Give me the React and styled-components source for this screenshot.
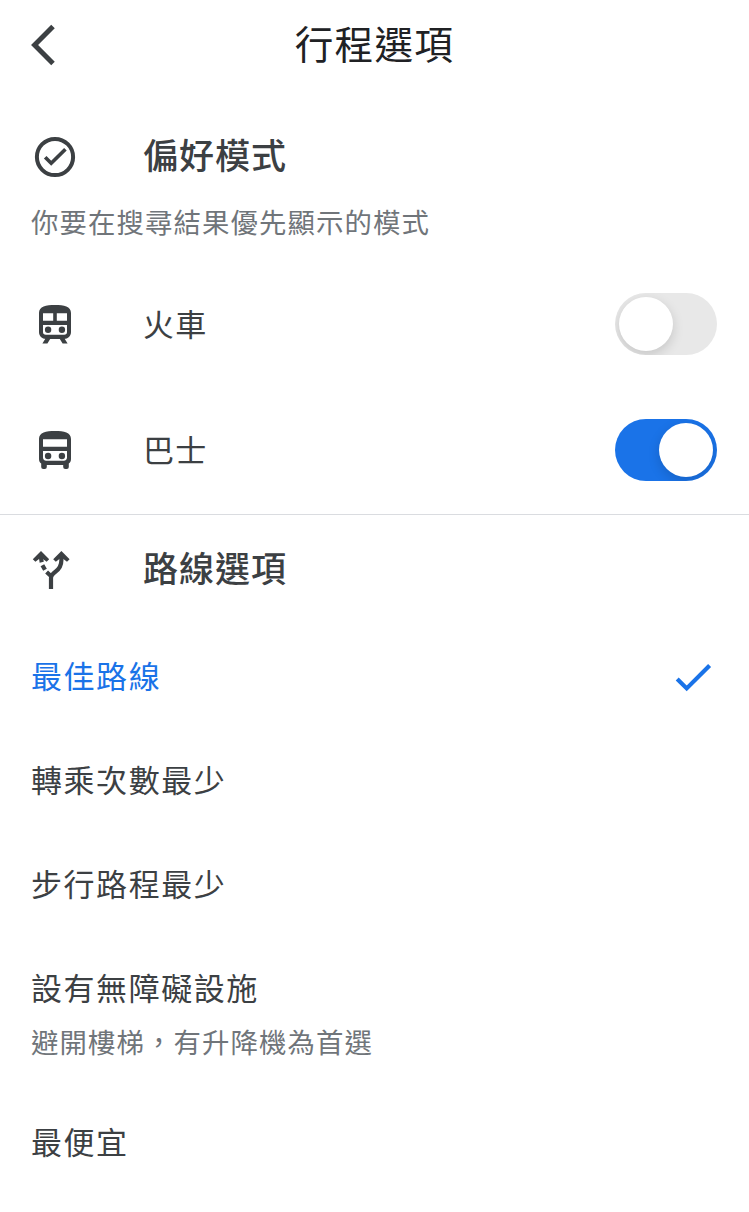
import { useState } from "react";
import styled, { createGlobalStyle } from "styled-components";

const GlobalStyle = createGlobalStyle`
  * {
    box-sizing: border-box;
  }
  body {
    margin: 0;
    background: #fff;
    color: #3c4043;
    font-family: "Noto Sans CJK TC", sans-serif;
  }
`;

const Page = styled.main`
  width: 749px;
  height: 1212px;
  overflow: hidden;
  background: #fff;
`;

const Header = styled.header`
  display: grid;
  grid-template-columns: 112px 1fr 112px;
  align-items: center;
  height: 90px;
`;

const Title = styled.h1`
  margin: 0;
  padding-bottom: 6px;
  font-size: 38.6px;
  font-weight: 400;
  line-height: 60px;
  letter-spacing: 1.3px;
  text-align: center;
  color: #202124;
`;

const IconButton = styled.button`
  display: flex;
  width: 48px;
  height: 48px;
  margin-left: 19px;
  padding: 0;
  border: none;
  background: none;
  color: #3c4043;
`;

const Section = styled.section`
  padding-top: ${(props) => props.$top || "0"};
  padding-bottom: ${(props) => (props.$divider ? "1px" : "0")};
  border-bottom: ${(props) => (props.$divider ? "1px solid #dadce0" : "none")};
`;

const Row = styled.div`
  display: flex;
  align-items: center;
  height: ${(props) => props.$height};
  padding: 0 32px 0 31px;
`;

const Icon = styled.svg`
  flex: none;
  width: 48px;
  height: 48px;
`;

const Heading = styled.h2`
  margin: 0 0 0 64px;
  padding-bottom: 6px;
  font-size: 35px;
  font-weight: 500;
  line-height: 54px;
  letter-spacing: 1px;
`;

const Label = styled.span`
  flex: 1;
  margin-left: 64px;
  padding-bottom: 3px;
  font-size: 31px;
  line-height: 48px;
  letter-spacing: 1.2px;
`;

const Hint = styled.p`
  margin: 0;
  padding: 0 0 ${(props) => props.$bottom || "0"} 31px;
  font-size: 27.4px;
  line-height: ${(props) => props.$line || "42px"};
  letter-spacing: 1.1px;
  color: #70757a;
`;

const Switch = styled.button`
  display: flex;
  justify-content: ${(props) => (props.$on ? "flex-end" : "flex-start")};
  width: 102px;
  height: 62px;
  padding: 4px;
  border: none;
  border-radius: 31px;
  overflow: hidden;
  background: ${(props) => (props.$on ? "#1a73e8" : "#e8e8e8")};
`;

const Knob = styled.span`
  width: 54px;
  height: 54px;
  border-radius: 50%;
  background: #fff;
  box-shadow: 0 4px 12px rgba(0, 0, 0, 0.15);
`;

const Option = styled.div`
  display: flex;
  align-items: center;
  justify-content: space-between;
  height: 104px;
  padding: 0 32px 0 31px;
  font-size: 31px;
  line-height: 48px;
  letter-spacing: 1.55px;
  color: ${(props) => (props.$selected ? "#1a73e8" : "#3c4043")};
`;

const OptionText = styled.span`
  padding-bottom: 4px;
`;

const OptionGroup = styled.div`
  height: 154px;

  ${Hint} {
    margin-top: -21px;
  }
`;

const BackIcon = () => (
  <Icon viewBox="0 0 48 48" fill="none" stroke="currentColor" strokeWidth="5">
    <path d="M34 5.6 15.6 24 34 42.4" />
  </Icon>
);

const CircleCheckIcon = () => (
  <Icon viewBox="0 0 48 48" fill="none" stroke="currentColor">
    <circle cx="24" cy="24" r="18.1" strokeWidth="4" />
    <path d="M14.2 24.3 20.2 30.2 34.4 16.2" strokeWidth="3.7" />
  </Icon>
);

const TrainIcon = () => (
  <Icon viewBox="0 0 48 48" fill="currentColor">
    <path
      fillRule="evenodd"
      d="M24 5c9 0 16 1.2 16 8v19c0 4-3 7-7 7H15c-4 0-7-3-7-7V13c0-6.8 7-8 16-8ZM12 13.200v7.600H22.2V13.200ZM25.800 13.200v7.600H36V13.200ZM12 25V32c0 1.800 1 2.800 2.800 2.800h18.400c1.800 0 2.800-1 2.800-2.800v-7Z"
    />
    <circle cx="17.1" cy="29.800" r="3.2" />
    <circle cx="30.9" cy="29.800" r="3.2" />
    <path d="M14.8 38h5L16.4 43.6H11.4ZM33.2 38h-5L31.6 43.6H36.6Z" />
  </Icon>
);

const BusIcon = () => (
  <Icon viewBox="0 0 48 48" fill="currentColor">
    <path
      fillRule="evenodd"
      d="M24 5c9 0 16 1.4 16 8v20c0 2-.8 3.500-2.200 4.600V41a2 2 0 0 1-2 2h-1.600a2 2 0 0 1-2-2v-2H15.800v2a2 2 0 0 1-2 2h-1.600a2 2 0 0 1-2-2v-3.400C8.800 36.500 8 35 8 33V13c0-6.600 7-8 16-8ZM12 13.200v7.600h24V13.200ZM12 25v6.600c0 2 1.200 3.200 3.200 3.200h17.600c2 0 3.200-1.200 3.200-3.200V25Z"
    />
    <circle cx="17.1" cy="30" r="3.2" />
    <circle cx="30.9" cy="30" r="3.2" />
  </Icon>
);

const RoutesIcon = () => (
  <Icon viewBox="0 0 48 48" fill="none" stroke="currentColor" strokeWidth="4.2">
    <path
      d="M10 5 18.200 13.200 15.600 15.800 10 11.500 4.400 15.800 1.800 13.200ZM30.400 5 38.600 13.200 36 15.800 30.400 11.500 24.800 15.800 22.200 13.200Z"
      fill="currentColor"
      stroke="none"
    />
    <path d="M30.400 8v6c0 6.500-2.400 9.200-6 11.700-2.700 2-4.400 3.300-4.400 6.300v11" />
    <path d="M10 8C10 11.500 10.200 14 10.700 16.300M11.400 19.200 14 23.800M15.600 26 20.500 30.500" />
  </Icon>
);

const CheckIcon = () => (
  <Icon viewBox="0 0 48 48" fill="none" stroke="currentColor" strokeWidth="4.2">
    <path d="M8.2 26 17.700 35.400 40.600 12.500" />
  </Icon>
);

const modes = [
  { id: "train", label: "火車", icon: TrainIcon },
  { id: "bus", label: "巴士", icon: BusIcon },
];

const routes = [
  { label: "最佳路線" },
  { label: "轉乘次數最少" },
  { label: "步行路程最少" },
  { label: "設有無障礙設施", hint: "避開樓梯，有升降機為首選" },
  { label: "最便宜" },
];

const App = () => {
  const [enabled, setEnabled] = useState({ train: false, bus: true });
  const [selected, setSelected] = useState("最佳路線");

  const toggle = (id) => setEnabled({ ...enabled, [id]: !enabled[id] });

  const renderOption = ({ label }) => (
    <Option
      key={label}
      $selected={selected === label}
      onClick={() => setSelected(label)}
    >
      <OptionText>{label}</OptionText>
      {selected === label && <CheckIcon />}
    </Option>
  );

  return (
    <>
      <GlobalStyle />
      <Page>
        <Header>
          <IconButton aria-label="返回">
            <BackIcon />
          </IconButton>
          <Title>行程選項</Title>
        </Header>
        <Section $top="35px" $divider>
          <Row $height="64px">
            <CircleCheckIcon />
            <Heading>偏好模式</Heading>
          </Row>
          <Hint $line="64px" $bottom="8px">
            你要在搜尋結果優先顯示的模式
          </Hint>
          {modes.map(({ id, label, icon: ModeIcon }) => (
            <Row key={id} $height="126px">
              <ModeIcon />
              <Label>{label}</Label>
              <Switch
                role="switch"
                aria-label={label}
                aria-checked={enabled[id]}
                $on={enabled[id]}
                onClick={() => toggle(id)}
              >
                <Knob />
              </Switch>
            </Row>
          ))}
        </Section>
        <Section>
          <Row $height="110px">
            <RoutesIcon />
            <Heading>路線選項</Heading>
          </Row>
          {routes.map((route) =>
            route.hint ? (
              <OptionGroup key={route.label}>
                {renderOption(route)}
                <Hint>{route.hint}</Hint>
              </OptionGroup>
            ) : (
              renderOption(route)
            )
          )}
        </Section>
      </Page>
    </>
  );
};

export default App;
